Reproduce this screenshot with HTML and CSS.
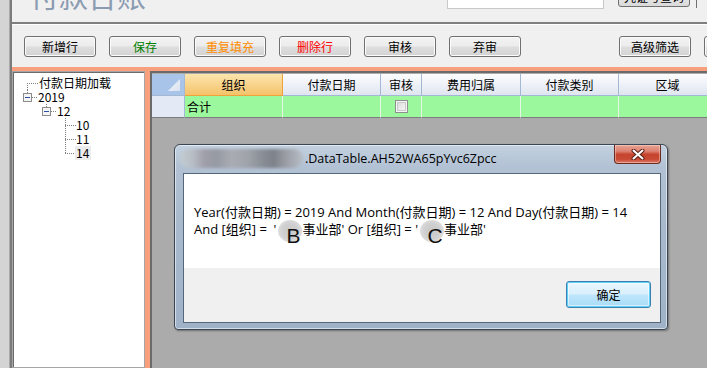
FILE: index.html
```html
<!DOCTYPE html>
<html>
<head>
<meta charset="utf-8">
<link rel="stylesheet" href="styles.css">
</head>
<body>
<div class="app">
  <div class="edge"></div>
  <div class="main">
    <div class="top">
      <div class="title">付款台账</div>
      <div class="search"></div>
      <div class="qbtn">凭证号查询</div>
      <div class="qbtn2"></div>
    </div>
    <div class="toolbar">
      <button class="btn">新增行</button>
      <button class="btn green">保存</button>
      <button class="btn orange">重复填充</button>
      <button class="btn red">删除行</button>
      <button class="btn">审核</button>
      <button class="btn">弃审</button>
      <button class="btn adv">高级筛选</button>
      <button class="btn">导出</button>
    </div>
    <div class="work">
      <div class="tree">
        <div class="trow">
          <svg class="tl" width="25" height="14"><path d="M13.5 7V14M13 7.5H24" class="dots"/></svg>
          <span class="tt">付款日期加载</span>
        </div>
        <div class="trow">
          <svg class="tl" width="24" height="14"><path d="M13.5 0V3M18 7.5H24M32.5 12V14" class="dots"/><rect x="9.5" y="3.5" width="8" height="8" class="box"/><path d="M11 7.5H16" class="minus"/></svg>
          <span class="tt">2019</span>
        </div>
        <div class="trow">
          <svg class="tl" width="43" height="14"><path d="M32.5 0V3M37 7.5H43M51.5 12V14" class="dots"/><rect x="28.5" y="3.5" width="8" height="8" class="box"/><path d="M30 7.5H35" class="minus"/></svg>
          <span class="tt">12</span>
        </div>
        <div class="trow">
          <svg class="tl" width="62" height="14"><path d="M51.5 0V14M51 7.5H62" class="dots"/></svg>
          <span class="tt">10</span>
        </div>
        <div class="trow">
          <svg class="tl" width="62" height="14"><path d="M51.5 0V14M51 7.5H62" class="dots"/></svg>
          <span class="tt">11</span>
        </div>
        <div class="trow">
          <svg class="tl" width="62" height="14"><path d="M51.5 0V8M51 7.5H62" class="dots"/></svg>
          <span class="tt sel">14</span>
        </div>
      </div>
      <div class="gridwrap">
        <div class="grid">
          <div class="h corner"><svg width="12" height="12"><defs><linearGradient id="tg" x1="0" y1="0" x2="1" y2="1"><stop offset="0" stop-color="#f6f8fc"/><stop offset="1" stop-color="#d9e2ef"/></linearGradient></defs><polygon points="12,0 12,12 0,12" fill="url(#tg)"/></svg></div>
          <div class="h hsel">组织</div>
          <div class="h">付款日期</div>
          <div class="h">审核</div>
          <div class="h">费用归属</div>
          <div class="h">付款类别</div>
          <div class="h">区域</div>
          <div class="rh"></div>
          <div class="c left">合计</div>
          <div class="c"></div>
          <div class="c"><span class="chk"></span></div>
          <div class="c"></div>
          <div class="c"></div>
          <div class="c"></div>
        </div>
      </div>
    </div>
  </div>
</div>

<div class="dialog">
  <div class="dtitle">
    <div class="blur"></div>
    <div class="dtext">.DataTable.AH52WA65pYvc6Zpcc</div>
    <div class="close"><svg width="14" height="11" viewBox="0 0 14 11"><path d="M2.5 1.5L11.5 9.5M11.5 1.5L2.5 9.5" stroke="#5a2018" stroke-width="4" stroke-linecap="round"/><path d="M2.5 1.5L11.5 9.5M11.5 1.5L2.5 9.5" stroke="#ffffff" stroke-width="2" stroke-linecap="round"/></svg></div>
  </div>
  <div class="client">
    <div class="msg">
      <div class="line">Year(付款日期) = 2019 And Month(付款日期) = 12 And Day(付款日期) = 14</div>
      <div class="line">And [组织] =&nbsp; '<span class="mark"><span class="ml">B</span></span>事业部' Or [组织] = '<span class="mark"><span class="ml">C</span></span>事业部'</div>
    </div>
    <div class="actions">
      <button class="ok">确定</button>
    </div>
  </div>
</div>
</body>
</html>
```

FILE: styles.css
```css
html, body {
  margin: 0;
  width: 707px;
  height: 368px;
  overflow: hidden;
}
body {
  position: relative;
  background: #f0f0f0;
  font-family: "Noto Sans CJK SC", sans-serif;
  font-size: 12px;
  color: #000;
}
.app {
  display: flex;
  height: 368px;
}
.edge {
  width: 9px;
  flex-shrink: 0;
  background: #d4d4d4;
  border-right: 1px solid #a9a9a9;
}
.main {
  flex: 1;
  min-width: 0;
  border-left: 2px solid #7c7c7c;
  display: flex;
  flex-direction: column;
}

/* top header strip (cut off) */
.top {
  height: 22px;
  flex-shrink: 0;
  display: flex;
  align-items: flex-start;
  overflow: hidden;
  border-bottom: 2px solid #7f7f7f;
}
.title {
  margin-left: 18px;
  margin-top: -22px;
  font-size: 29px;
  line-height: 34px;
  color: #8b9bb1;
  white-space: nowrap;
}
.search {
  margin-left: auto;
  margin-top: -10px;
  width: 155px;
  height: 17px;
  background: #fff;
  border: 1px solid #c9c9c9;
  flex-shrink: 0;
}
.qbtn {
  margin-left: 14px;
  margin-top: -14px;
  width: 70px;
  height: 19px;
  border: 1px solid #707070;
  border-radius: 3px;
  background: linear-gradient(#f2f2f2, #dadada);
  text-align: center;
  line-height: 20px;
  flex-shrink: 0;
}
.qbtn2 {
  margin-left: 6px;
  margin-top: -14px;
  width: 10px;
  height: 22px;
  border-left: 1px solid #707070;
  flex-shrink: 0;
}

/* toolbar */
.toolbar {
  height: 43px;
  box-sizing: border-box;
  flex-shrink: 0;
  border-top: 1px solid #ffffff;
  padding: 11px 0 0 12px;
  display: flex;
  align-items: flex-start;
  gap: 13px;
  overflow: hidden;
}
.btn {
  flex-shrink: 0;
  width: 72px;
  height: 21px;
  padding: 0;
  margin: 0;
  border: 1px solid #707070;
  border-radius: 3px;
  background: linear-gradient(#f3f3f3 0%, #ececec 48%, #dedede 52%, #d3d3d3 100%);
  box-shadow: inset 0 0 0 1px #fbfbfb;
  font-family: "Noto Sans CJK SC", sans-serif;
  font-size: 12px;
  line-height: 18px;
  color: #000;
}
.btn.green { color: #008000; }
.btn.orange { color: #ff8c00; }
.btn.red { color: #ff0000; }
.btn.adv { margin-left: 85px; }

/* work area */
.work {
  flex: 1;
  display: flex;
  background: #f8a07e;
  padding-top: 4px;
  min-height: 0;
}
.tree {
  width: 133px;
  flex-shrink: 0;
  box-sizing: border-box;
  background: #fff;
  border: 1px solid #a5a5a5;
  box-shadow: inset 1px 1px 0 #6c6c6c;
  padding: 4px 0 0 1px;
  margin-right: 5px;
}
.trow {
  height: 14px;
  display: flex;
  align-items: center;
}
.tl {
  flex-shrink: 0;
  display: block;
}
.dots {
  stroke: #808080;
  stroke-width: 1;
  stroke-dasharray: 1 1;
  fill: none;
}
.box {
  fill: #f4f4f4;
  stroke: #8c8c8c;
  stroke-width: 1;
}
.minus {
  stroke: #2c4fa8;
  stroke-width: 1;
}
.tt {
  line-height: 14px;
  white-space: nowrap;
}
.tt.sel {
  background: #ececec;
  padding: 0 2px 0 1px;
  margin-left: -1px;
}

.gridwrap {
  flex: 1;
  min-width: 0;
  background: #ababab;
  border-left: 2px solid #6b6b6b;
  border-top: 2px solid #6b6b6b;
  padding-top: 1px;
  overflow: hidden;
}
.grid {
  display: grid;
  grid-template-columns: 33px 98px 98px 41px 99px 98px 98px;
  grid-auto-rows: 22px;
}
.h {
  box-sizing: border-box;
  border-right: 1px solid #a2b8d4;
  border-bottom: 1px solid #a2b8d4;
  background: linear-gradient(#fdfdfe 0%, #eef1f7 50%, #dfe5ef 100%);
  text-align: center;
  line-height: 21px;
  white-space: nowrap;
}
.h.corner {
  background: #a9c4e9;
  display: flex;
  justify-content: flex-end;
  align-items: flex-end;
  padding: 0 4px 4px 0;
}
.h.corner svg { display: block; }
.h.hsel {
  background: linear-gradient(#fbe5ad 0%, #f8d48c 50%, #f4c26a 100%);
  border-right: 1px solid #f0a23a;
  border-bottom: 1px solid #f0a23a;
}
.rh {
  box-sizing: border-box;
  background: #e3e9f5;
  border-right: 1px solid #a2b8d4;
  border-bottom: 1px solid #7d7d7d;
}
.c {
  box-sizing: border-box;
  background: #9cf89c;
  border-right: 1px solid #e6f6e6;
  border-bottom: 1px solid #7d7d7d;
  line-height: 20px;
  display: flex;
  justify-content: center;
  align-items: center;
}
.c.left {
  justify-content: flex-start;
  padding-left: 2px;
}
.chk {
  display: block;
  width: 13px;
  height: 13px;
  box-sizing: border-box;
  border: 1px solid #8e8f8f;
  background: linear-gradient(135deg, #d8d8d8, #fbfbfb);
  box-shadow: inset 0 0 0 1px #f6f6f6, inset 0 0 0 2px #c9c9c9;
  margin-top: -1px;
}

/* dialog overlay */
.dialog {
  position: absolute;
  left: 174px;
  top: 144px;
  width: 494px;
  height: 186px;
  box-sizing: border-box;
  border: 1px solid #3b4654;
  border-radius: 6px 6px 4px 4px;
  background: linear-gradient(180deg, #c3d1df 0%, #b2c2d4 12%, #a9bacd 40%, #9fb2c8 100%);
  box-shadow: inset 0 0 0 1px rgba(255,255,255,0.55), 1px 1px 2px rgba(0,0,0,0.35);
  display: flex;
  flex-direction: column;
  padding: 0 6px 6px 8px;
}
.dtitle {
  height: 28px;
  flex-shrink: 0;
  display: flex;
  align-items: center;
}
.blur {
  width: 123px;
  height: 19px;
  margin-left: -3px;
  margin-right: 2px;
  margin-top: -2px;
  border-radius: 9px;
  background: linear-gradient(90deg, #c2ccd2 0%, #b8bec5 10%, #a09ea9 20%, #959aa3 30%, #aaacb4 42%, #9fa3aa 55%, #8b9098 66%, #7d8189 76%, #9a9da4 86%, #b7bec6 100%);
  filter: blur(1.5px);
  flex-shrink: 0;
}
.dtext {
  font-family: "Open Sans", "Noto Sans", sans-serif;
  font-size: 12.5px;
  color: #000;
  margin-top: -2px;
  white-space: nowrap;
}
.close {
  margin-left: auto;
  align-self: flex-start;
  margin-top: 0;
  width: 47px;
  height: 19px;
  box-sizing: border-box;
  border: 1px solid #6a2c22;
  border-top: none;
  border-radius: 0 0 4px 4px;
  background: linear-gradient(#e9a595 0%, #dc8070 35%, #c5442e 52%, #c84a35 80%, #df7e69 100%);
  box-shadow: inset 0 0 0 1px rgba(255,220,210,0.45);
  display: flex;
  justify-content: center;
  align-items: center;
}
.close svg { display: block; }
.client {
  flex: 1;
  display: flex;
  flex-direction: column;
  border: 1px solid #56677a;
  background: #f0f0f0;
}
.msg {
  height: 94px;
  flex-shrink: 0;
  background: #ffffff;
  padding: 30px 0 0 10px;
  box-sizing: border-box;
  font-family: "Open Sans", "Noto Sans CJK SC", sans-serif;
  font-size: 13px;
  color: #000;
}
.line {
  line-height: 17px;
  white-space: nowrap;
}
.mark {
  display: inline-block;
  width: 24px;
  height: 22px;
  margin: -6px 0 -6px 2px;
  vertical-align: middle;
  border-radius: 50%;
  background: radial-gradient(circle, #c9c9c9 0%, #cfcfcf 45%, #dcdcdc 70%, rgba(235,235,235,0) 100%);
  position: relative;
  text-align: center;
}
.ml {
  position: relative;
  top: 5px;
  left: 3px;
  font-family: "Liberation Sans", sans-serif;
  font-size: 21px;
  line-height: 22px;
  color: #111;
}
.actions {
  flex: 1;
  display: flex;
  justify-content: flex-end;
  align-items: flex-start;
  padding: 13px 9px 0 0;
}
.ok {
  width: 85px;
  height: 27px;
  padding: 0;
  border: 1px solid #3c7fb1;
  border-radius: 3px;
  background: linear-gradient(#eaf6fd 0%, #d9f0fc 48%, #bee6fd 52%, #a9dbf6 100%);
  box-shadow: inset 0 0 0 1px #5fd1f7, inset 0 0 0 2px rgba(255,255,255,0.5);
  font-family: "Noto Sans CJK SC", sans-serif;
  font-size: 12px;
  color: #000;
}
```
